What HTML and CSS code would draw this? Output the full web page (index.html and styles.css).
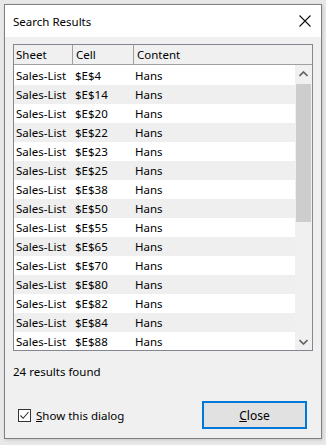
FILE: index.html
```html
<!DOCTYPE html>
<html>
<head>
    <title>Search Results</title>
    <link rel="stylesheet" href="styles.css">
</head>
<body>
    <div class="window">
        <div class="titlebar">
            <span class="title">Search Results</span>
            <svg class="close-x" width="12" height="12" viewBox="0 0 12 12">
                <path d="M0.5 0.5 L11.5 11.5 M11.5 0.5 L0.5 11.5" stroke="#111" stroke-width="1.1" fill="none"/>
            </svg>
        </div>
        <div class="content">
            <div class="list">
                <div class="list-head">
                    <div class="col col-sheet">Sheet</div>
                    <div class="col col-cell">Cell</div>
                    <div class="col col-content">Content</div>
                </div>
                <div class="list-body">
                    <div class="rows" id="rows"></div>
                    <div class="scrollbar">
                        <div class="arrow">
                            <svg width="9" height="6" viewBox="0 0 9 6"><path d="M0.5 5 L4.5 1 L8.5 5" stroke="#606060" stroke-width="1.6" fill="none"/></svg>
                        </div>
                        <div class="track"><div class="thumb"></div></div>
                        <div class="arrow">
                            <svg width="9" height="6" viewBox="0 0 9 6"><path d="M0.5 1 L4.5 5 L8.5 1" stroke="#606060" stroke-width="1.6" fill="none"/></svg>
                        </div>
                    </div>
                </div>
            </div>
            <div class="status">24 results found</div>
            <div class="footer">
                <label class="check">
                    <span class="box">
                        <svg width="11" height="11" viewBox="0 0 11 11"><path d="M1.5 5.5 L4.2 8.3 L9.5 2" stroke="#333" stroke-width="1.1" fill="none"/></svg>
                    </span>
                    <span><u>S</u>how this dialog</span>
                </label>
                <button class="close-button"><u>C</u>lose</button>
            </div>
        </div>
    </div>

    <script>
        const cells = ["$E$4", "$E$14", "$E$20", "$E$22", "$E$23", "$E$25", "$E$38", "$E$50",
            "$E$55", "$E$65", "$E$70", "$E$80", "$E$82", "$E$84", "$E$88"];
        const rows = document.getElementById("rows");
        cells.forEach(cell => {
            const row = document.createElement("div");
            row.classList.add("row");
            row.innerHTML = `<div class="col col-sheet">Sales-List</div><div class="col col-cell">${cell}</div><div class="col col-content">Hans</div>`;
            rows.appendChild(row);
        });
    </script>
</body>
</html>
```

FILE: styles.css
```css
body {
    margin: 0;
    background: #e8e8e8;
    font-family: "Segoe UI", "Noto Sans", sans-serif;
    font-size: 11.5px;
    color: #000;
}

.window {
    margin: 4px;
    width: 316px;
    height: 433px;
    border: 1px solid #7f7f7f;
    background: #f0f0f0;
    display: flex;
    flex-direction: column;
    box-shadow: 1px 1px 3px rgba(0, 0, 0, 0.15);
}

.titlebar {
    height: 32px;
    background: #fff;
    display: flex;
    align-items: center;
    justify-content: space-between;
    padding: 0 10px 0 8px;
}

.title {
    padding-top: 1px;
}

.close-x {
    display: block;
}

.content {
    padding: 7px 8px 0 8px;
    flex: 1;
    display: flex;
    flex-direction: column;
}

.list {
    width: 298px;
    height: 305px;
    border: 1px solid #828790;
    background: #fff;
    display: flex;
    flex-direction: column;
}

.list-head {
    display: flex;
    height: 19px;
    background: #f0f0f0;
    border-bottom: 1px solid #a0a0a0;
}

.list-head .col {
    border-right: 1px solid #a0a0a0;
    line-height: 19px;
}

.list-head .col-content {
    border-right: none;
}

.col {
    padding-left: 2px;
    white-space: nowrap;
    overflow: hidden;
}

.col-sheet {
    width: 56px;
}

.col-cell {
    width: 57px;
    padding-left: 3px;
}

.col-content {
    flex: 1;
    padding-left: 3px;
}

.list-body {
    flex: 1;
    display: flex;
    overflow: hidden;
}

.rows {
    flex: 1;
    padding-top: 1px;
    overflow: hidden;
}

.row {
    display: flex;
    height: 19px;
    line-height: 19px;
}

.row:nth-child(even) {
    background: #efefef;
}

.scrollbar {
    width: 17px;
    background: #f0f0f0;
    display: flex;
    flex-direction: column;
}

.arrow {
    height: 17px;
    display: flex;
    align-items: center;
    justify-content: center;
}

.track {
    flex: 1;
    padding: 2px 1px 0 1px;
}

.thumb {
    height: 138px;
    background: #cdcdcd;
}

.status {
    margin-top: 13px;
    height: 16px;
    line-height: 16px;
}

.footer {
    display: flex;
    justify-content: space-between;
    align-items: center;
    margin-top: 21px;
    padding-left: 5px;
}

.check {
    display: flex;
    align-items: center;
    gap: 5px;
}

.box {
    width: 11px;
    height: 11px;
    border: 1px solid #333;
    background: #fff;
    display: flex;
}

.close-button {
    width: 105px;
    height: 28px;
    margin-right: 6px;
    background: #e1e1e1;
    border: 2px solid #0078d7;
    font-family: inherit;
    font-size: 12px;
    color: #000;
    padding: 0;
}
```
